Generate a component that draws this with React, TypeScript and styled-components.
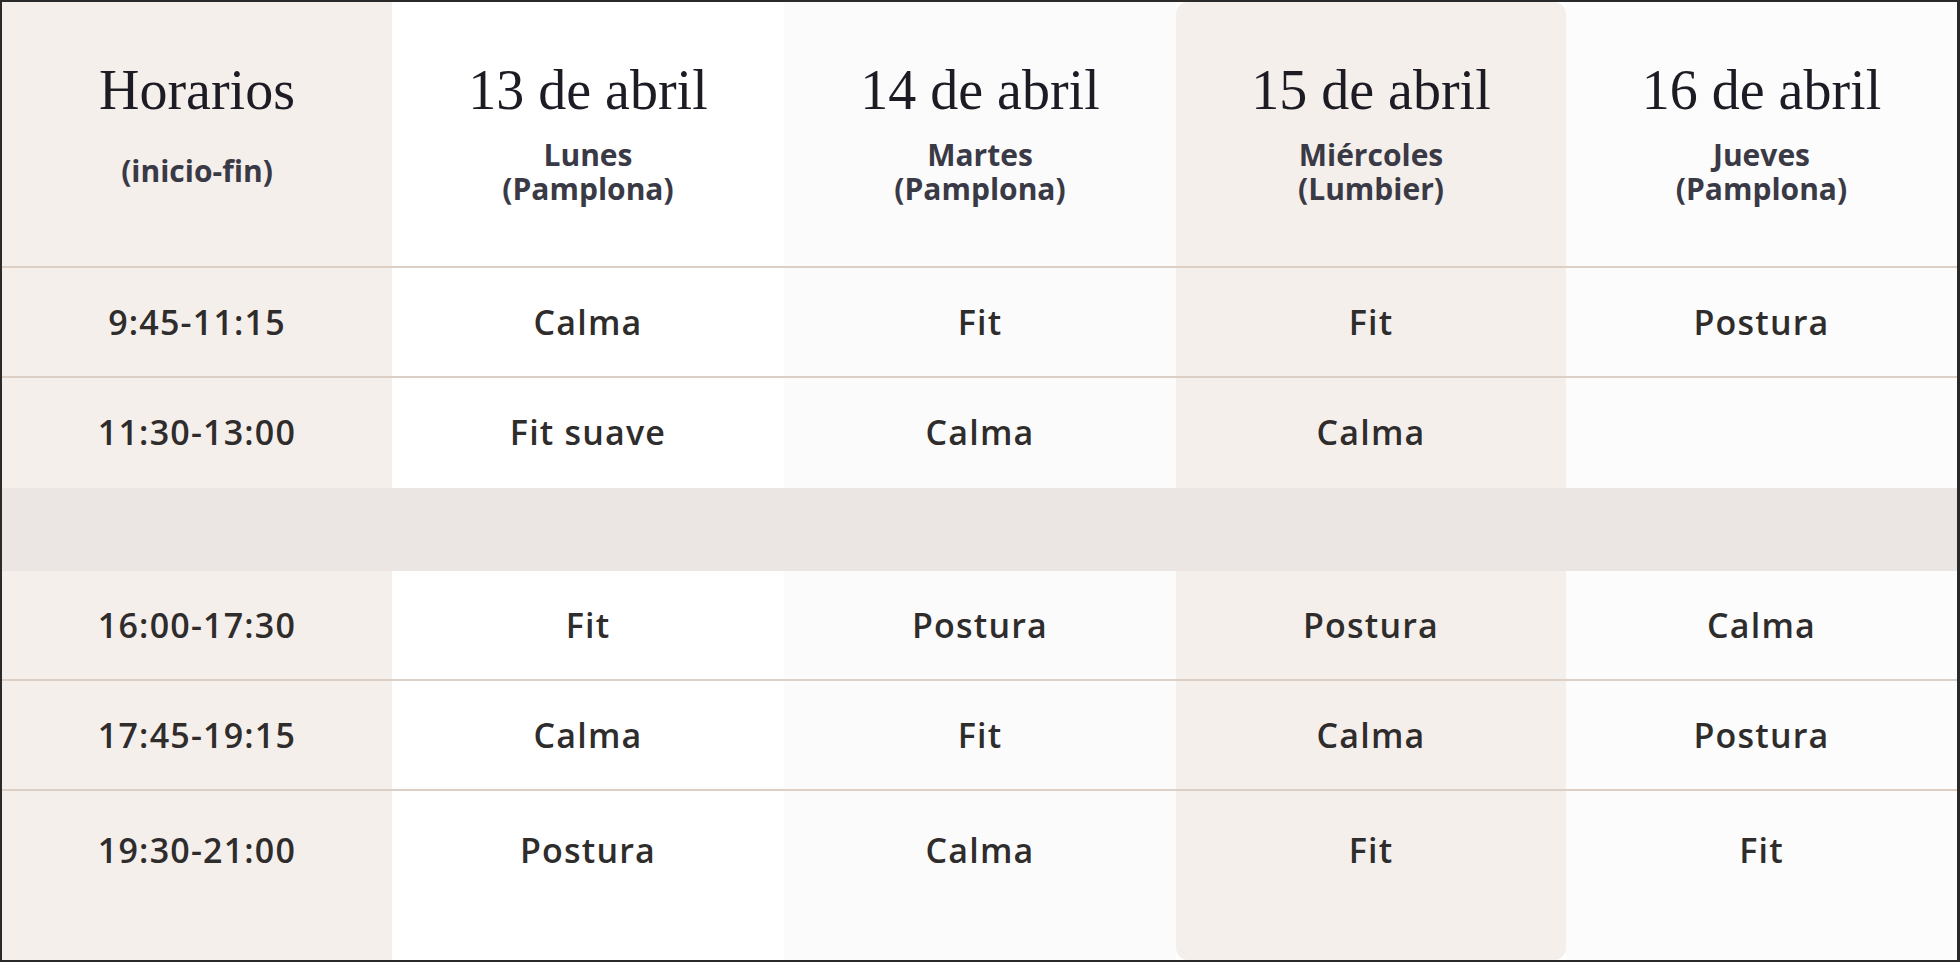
import React from 'react';
import styled, { createGlobalStyle } from 'styled-components';

const GlobalStyle = createGlobalStyle`
    html, body {
        margin: 0;
        padding: 0;
        background: #ffffff;
    }
`

type Day = {
    date: string;
    weekday: string;
    place: string;
    morning: string[];
    afternoon: string[];
    tone: 'white' | 'soft' | 'accent' | 'cool';
};

const slotsMorning = ['9:45-11:15', '11:30-13:00'];
const slotsAfternoon = ['16:00-17:30', '17:45-19:15', '19:30-21:00'];

const days: Day[] = [
    { date: '13 de abril', weekday: 'Lunes', place: '(Pamplona)', morning: ['Calma', 'Fit suave'], afternoon: ['Fit', 'Calma', 'Postura'], tone: 'white' },
    { date: '14 de abril', weekday: 'Martes', place: '(Pamplona)', morning: ['Fit', 'Calma'], afternoon: ['Postura', 'Fit', 'Calma'], tone: 'soft' },
    { date: '15 de abril', weekday: 'Miércoles', place: '(Lumbier)', morning: ['Fit', 'Calma'], afternoon: ['Postura', 'Calma', 'Fit'], tone: 'accent' },
    { date: '16 de abril', weekday: 'Jueves', place: '(Pamplona)', morning: ['Postura', ''], afternoon: ['Calma', 'Postura', 'Fit'], tone: 'cool' },
];

const tones = {
    white: '#ffffff',
    soft: '#fbfbfb',
    accent: '#f5efec',
    cool: '#fcfcfd',
    times: '#f5efec',
};

export default function App() {
    return (
        <>
            <GlobalStyle />
            <Board>
                <Column tone={tones.times}>
                    <HeaderCell>
                        <Title>Horarios</Title>
                        <TimesNote>(inicio-fin)</TimesNote>
                    </HeaderCell>
                    {slotsMorning.map((s, i) => (
                        <Cell key={s} line={i === 0}>{s}</Cell>
                    ))}
                    <Break />
                    {slotsAfternoon.map((s, i) => (
                        <Cell key={s} line={i < 2} last={i === 2}>{s}</Cell>
                    ))}
                </Column>
                {days.map((d) => (
                    <Column key={d.date} tone={tones[d.tone]} rounded={d.tone === 'accent'}>
                        <HeaderCell>
                            <Title>{d.date}</Title>
                            <Sub>
                                <SubLine>{d.weekday}</SubLine>
                                <SubLine>{d.place}</SubLine>
                            </Sub>
                        </HeaderCell>
                        {d.morning.map((c, i) => (
                            <Cell key={'m' + i} line={i === 0}>{c}</Cell>
                        ))}
                        <Break />
                        {d.afternoon.map((c, i) => (
                            <Cell key={'a' + i} line={i < 2} last={i === 2}>{c}</Cell>
                        ))}
                    </Column>
                ))}
            </Board>
        </>
    );
}

const Board = styled.div`
    width: 1960px;
    height: 962px;
    box-sizing: border-box;
    border: 2px solid #2b2a2a;
    border-right-width: 3px;
    background: #ffffff;
    display: grid;
    grid-template-columns: 390px 392px 392px 390px 1fr;
    overflow: hidden;
`

const Column = styled.div<{ tone: string; rounded?: boolean }>`
    display: flex;
    flex-direction: column;
    background: ${(p) => p.tone};
    border-radius: ${(p) => (p.rounded ? '12px' : '0')};
    overflow: hidden;
`

const HeaderCell = styled.div`
    height: 264px;
    flex-shrink: 0;
    border-bottom: 2px solid #dccfc6;
    display: flex;
    flex-direction: column;
    align-items: center;
`

const Title = styled.h2`
    margin: 55px 0 0;
    font-family: "Liberation Serif", "Times New Roman", serif;
    font-weight: 400;
    font-size: 56px;
    line-height: 67px;
    color: #1d1b24;
    white-space: nowrap;
`

const Sub = styled.div`
    margin-top: 14px;
    display: flex;
    flex-direction: column;
    align-items: center;
    font-family: "Open Sans", "Liberation Sans", sans-serif;
    font-weight: 700;
    font-size: 30px;
    line-height: 34px;
    color: #3a3946;
    text-align: center;
`

const SubLine = styled.span`
    display: block;
    height: 34px;
    white-space: nowrap;
`

const TimesNote = styled(Sub)`
    margin-top: 30px;
`

const Cell = styled.div<{ line?: boolean; last?: boolean }>`
    height: 108px;
    flex-shrink: 0;
    display: flex;
    align-items: center;
    justify-content: center;
    padding-top: ${(p) => (p.last ? '5px' : '0')};
    border-bottom: 2px solid ${(p) => (p.line ? '#dccfc6' : 'transparent')};
    font-family: "Open Sans", "Liberation Sans", sans-serif;
    font-weight: 600;
    font-size: 34px;
    letter-spacing: 1.2px;
    color: #2f2c2c;
`

const Break = styled.div`
    height: 83px;
    flex-shrink: 0;
    background: #ebe6e3;
`
